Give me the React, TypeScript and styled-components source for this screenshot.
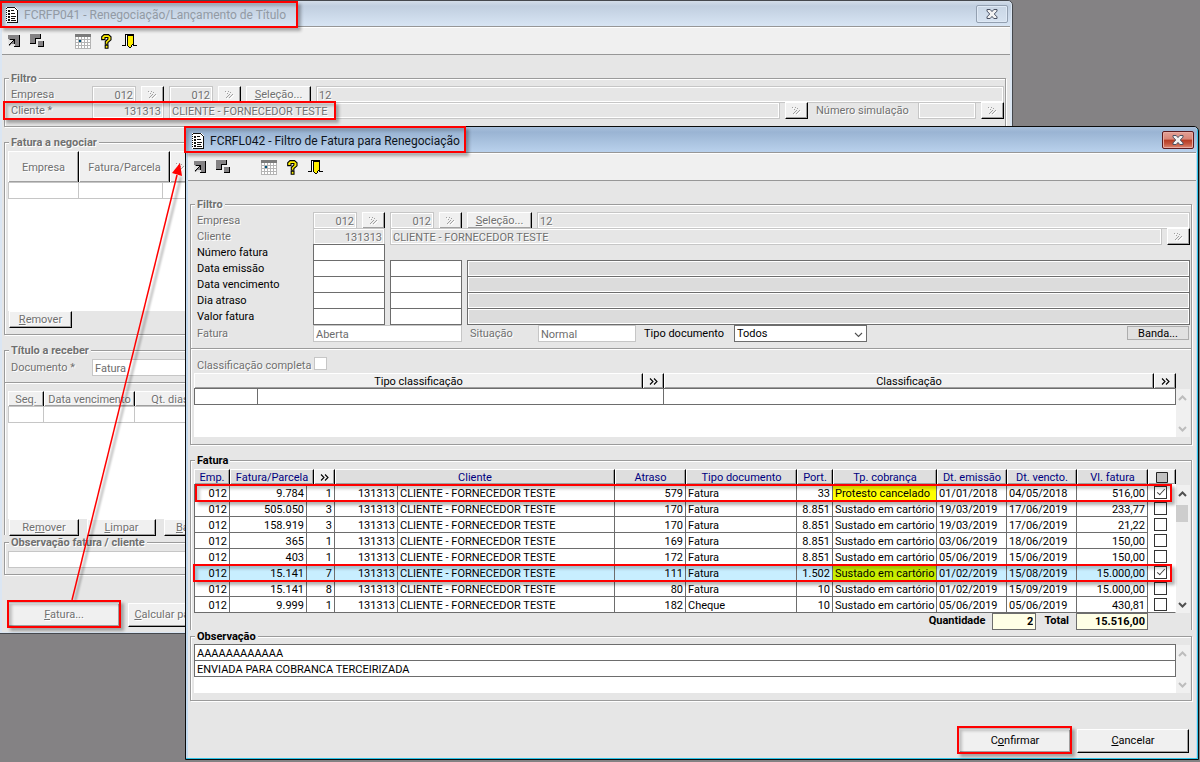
import React, { ReactNode } from "react";
import styled, { createGlobalStyle, css } from "styled-components";

const GlobalStyle = createGlobalStyle`
  *, *::before, *::after { box-sizing: border-box; }
  body {
    margin: 0;
    background: #848284;
    font-family: Roboto, "Liberation Sans", Arial, sans-serif;
    font-size: 11px;
    line-height: 15px;
    color: #000;
  }
  button, input, select { font: inherit; color: inherit; margin: 0; border-radius: 0; outline: none; }
`;

const muted = css`
  color: #707070;
  text-shadow: 1px 1px 0 #fff;
`;

const Desktop = styled.main`
  position: relative;
  min-height: 100vh;
  min-width: 1100px;
  overflow: hidden;
  background: #848284;
`;

/* ---------- window chrome ---------- */

const WindowBox = styled.section<{ $front?: boolean }>`
  position: absolute;
  top: ${(p) => (p.$front ? 126 : 0)}px;
  left: ${(p) => (p.$front ? 185 : -1)}px;
  right: ${(p) => (p.$front ? 1 : 187)}px;
  padding: 0 2px 1px;
  border: 1px solid ${(p) => (p.$front ? "#0b0b0b" : "#45484d")};
  border-radius: 0 5px 0 0;
  overflow: ${(p) => (p.$front ? "visible" : "hidden")};
  background: ${(p) => (p.$front ? "#c3daef" : "#dbe6f3")};
  box-shadow: ${(p) => (p.$front ? "inset -1px -1px 0 #2fc4e8" : "none")};
`;

const TitleBar = styled.header<{ $front?: boolean }>`
  display: flex;
  align-items: center;
  justify-content: space-between;
  height: 25px;
  margin: 0 -1px 0 -2px;
  padding: 0 3px 0 6px;
  border-radius: 0 4px 0 0;
  background: ${(p) =>
    p.$front
      ? "linear-gradient(#a9c0dc 0, #9ab4d3 5px, #b9d1ec 100%)"
      : "linear-gradient(#d3dde9 0, #c0cedf 5px, #d8e5f4 100%)"};
`;

const TitleText = styled.h1<{ $front?: boolean }>`
  display: flex;
  align-items: center;
  gap: 5px;
  margin: 0;
  padding-top: 3px;
  font: 400 12px/18px Roboto, "Noto Sans", sans-serif;
  white-space: nowrap;
  color: ${(p) => (p.$front ? "#10151c" : "#929aa4")};
`;

const CloseButton = styled.button<{ $front?: boolean }>`
  display: grid;
  place-items: center;
  width: 32px;
  height: 18px;
  padding: 0;
  border: 1px solid ${(p) => (p.$front ? "#5b1a1e" : "#93a0b1")};
  border-radius: 2px;
  box-shadow: inset 0 0 0 1px ${(p) => (p.$front ? "#e8aba2" : "#dfe9f5")};
  background: ${(p) =>
    p.$front
      ? "linear-gradient(#e2a096 0, #d98577 45%, #b53a22 50%, #c5563f 75%, #dd8a74 100%)"
      : "linear-gradient(#c9d6e5, #d6e2f0)"};
`;

const Toolbar = styled.nav`
  display: flex;
  height: 29px;
  border-top: 1px solid #979797;
  border-bottom: 1px solid #979797;
  box-shadow: inset 0 1px 0 #fff;
  background: #f0f0f0;
`;

const ToolButton = styled.button<{ $apart?: boolean }>`
  display: grid;
  place-items: center;
  width: 23px;
  padding: 1px 0 0 1px;
  margin-left: ${(p) => (p.$apart ? 23 : 0)}px;
  border: 0;
  background: none;
`;

const Body = styled.div`
  padding: 17px 4px 5px 2px;
  background: #e6e6e6;
`;

/* ---------- groups, rows, fields ---------- */

const Group = styled.fieldset<{ $top?: number; $bottom?: number; $joined?: boolean; $next?: boolean }>`
  min-width: 0;
  margin: ${(p) => (p.$next ? 1 : 0)}px 0 ${(p) => (p.$joined ? 0 : 9)}px;
  padding: ${(p) => p.$top ?? 1}px 1px ${(p) => (p.$joined ? 0 : p.$bottom ?? 7)}px 3px;
  border: 1px solid #9b9b9b;
  border-bottom-width: ${(p) => (p.$joined ? 0 : 1)}px;
  box-shadow: 1px ${(p) => (p.$joined ? 0 : 1)}px 0 #fff, inset 1px 1px 0 #fff;
`;

const Legend = styled.legend<{ $muted?: boolean }>`
  height: 13px;
  margin-left: 1px;
  padding: 0 2px;
  line-height: 13px;
  font-weight: 700;
  background: #e6e6e6;
  ${(p) => p.$muted && muted}
`;

const Row = styled.div<{ $before?: number }>`
  position: relative;
  display: flex;
  gap: 5px;
  height: 16px;
  margin-top: ${(p) => p.$before ?? 0}px;
`;

const Label = styled.label<{ $muted?: boolean; $width: number; $gap?: boolean }>`
  flex: none;
  width: ${(p) => p.$width}px;
  margin-right: ${(p) => (p.$gap ? 0 : -5)}px;
  padding: 1px 0 0 3px;
  line-height: 16px;
  white-space: nowrap;
  ${(p) => p.$muted && muted}
`;

const Field = styled.input<{
  $width?: number;
  $look?: "plain" | "off" | "shaded" | "listed" | "total";
  $right?: boolean;
}>`
  flex: ${(p) => (p.$width ? "none" : "1")};
  width: ${(p) => (p.$width ? p.$width + "px" : "auto")};
  min-width: 0;
  height: 17px;
  padding: 1px 2px 0;
  border: 1px solid #6d6d6d;
  background: #fff;
  text-align: ${(p) => (p.$right ? "right" : "left")};
  ${(p) =>
    p.$look === "off" &&
    css`
      ${muted}
      border-color: #c6c6c6;
      background: #e6e6e6;
      box-shadow: inset 1px 1px 0 #fff, inset -1px -1px 0 #fff;
    `}
  ${(p) =>
    p.$look === "shaded" &&
    css`
      background: #dcdcdc;
      box-shadow: inset 1px 1px 0 #fff, inset -1px -1px 0 #fff;
    `}
  ${(p) =>
    p.$look === "listed" &&
    css`
      color: #6d6d6d;
      border-color: #c6c6c6;
    `}
  ${(p) =>
    p.$look === "total" &&
    css`
      padding-top: 0;
      background: #ffffe6;
      font-weight: 700;
    `}
`;

const PushButton = styled.button<{
  $width: number;
  $tall?: boolean;
  $muted?: boolean;
  $flat?: boolean;
}>`
  position: relative;
  display: flex;
  align-items: center;
  justify-content: center;
  flex: none;
  width: ${(p) => p.$width}px;
  height: ${(p) => (p.$tall ? 24 : 17)}px;
  padding: 0 0 ${(p) => (p.$tall ? 2 : 0)}px;
  white-space: pre;
  border: solid;
  border-width: 1px;
  border-color: #fff #000 #000 #fff;
  box-shadow: inset -1px -1px 0 #a0a0a0;
  background: #f0f0f0;
  ${(p) => p.$muted && muted}
  ${(p) =>
    p.$flat &&
    css`
      height: 14px;
      margin: 1px 1px 0 auto;
      border-color: #adadad;
      box-shadow: none;
      background: #e1e1e1;
    `}
`;

const SelectBox = styled.span`
  position: relative;
  flex: none;
  width: 133px;
  height: 17px;
  svg { position: absolute; right: 4px; top: 7px; pointer-events: none; }
`;

const Select = styled.select`
  appearance: none;
  display: block;
  width: 100%;
  height: 17px;
  padding: 0 0 2px 2px;
  border: 1px solid #6d6d6d;
  background: #fff;
`;

const Tick = styled.input<{ $muted?: boolean }>`
  appearance: none;
  position: relative;
  display: block;
  width: 13px;
  height: 13px;
  border: 1px solid ${(p) => (p.$muted ? "#c6c6c6" : "#333")};
  background: #fff;
  &:checked::after {
    content: "";
    position: absolute;
    left: 4px;
    top: 0;
    width: 4px;
    height: 8px;
    border: solid #444;
    border-width: 0 1px 1px 0;
    transform: rotate(42deg);
  }
`;

const Divider = styled.hr`
  height: 2px;
  margin: 7px -1px 7px -3px;
  border: 0;
  border-top: 1px solid #9b9b9b;
  background: #fff;
`;

const Commands = styled.div<{ $side: "left" | "right" }>`
  display: flex;
  gap: ${(p) => (p.$side === "left" ? 8 : 6)}px;
  justify-content: ${(p) => (p.$side === "left" ? "flex-start" : "flex-end")};
  margin-top: 28px;
  padding: ${(p) => (p.$side === "left" ? "0 0 0 4px" : "0 3px 0 0")};
`;

const GridButtons = styled.div`
  display: flex;
  gap: 8px;
  height: 16px;
  padding-left: 1px;
`;

/* ---------- grids ---------- */

const GridArea = styled.div`
  display: flex;
  position: relative;
`;

const Sheet = styled.div<{ $height?: number }>`
  flex: 1;
  min-width: 0;
  height: ${(p) => (p.$height ? p.$height + "px" : "auto")};
  background: #fff;
`;

const Grid = styled.table<{ $muted?: boolean }>`
  width: 100%;
  table-layout: fixed;
  border-collapse: separate;
  border-spacing: 0;
  --line: ${(p) => (p.$muted ? "#c6c6c6" : "#6d6d6d")};
`;

const Head = styled.th<{ $navy?: boolean; $muted?: boolean; $height?: number; $button?: boolean }>`
  height: ${(p) => p.$height ?? 15}px;
  padding: ${(p) => (p.$button ? 0 : 2)}px 0 0;
  font-weight: 400;
  line-height: 12px;
  white-space: nowrap;
  border-top: 1px solid #fff;
  border-right: 1px solid #000;
  border-left: 1px solid #fff;
  box-shadow: inset -1px -1px 0 #a0a0a0;
  color: ${(p) => (p.$navy ? "#000080" : "#000")};
  background: ${(p) => (p.$navy && !p.$button ? "#dedede" : "#f0f0f0")};
  ${(p) => p.$muted && muted}
  svg { display: block; margin: 0 auto; }
`;

const Cell = styled.td<{ $right?: boolean; $tint?: string; $open?: boolean }>`
  height: 16px;
  padding: 3px 2px 0;
  line-height: 12px;
  text-align: ${(p) => (p.$right ? "right" : "left")};
  vertical-align: top;
  white-space: nowrap;
  overflow: hidden;
  border-top: 1px solid var(--line);
  border-right: 1px solid var(--line);
  background: ${(p) => p.$tint ?? "transparent"};
  &:first-child { border-left: 1px solid var(--line); }
  tr:last-child > & { border-bottom: 1px solid var(--line); height: 17px; }
  ${(p) =>
    p.$open &&
    css`
      && { border-color: transparent; padding: 1px 0 0 6px; background: #fff; }
    `}
`;

const ScrollTrack = styled.div<{ $offset?: number }>`
  display: flex;
  flex-direction: column;
  justify-content: space-between;
  align-items: center;
  position: relative;
  width: 14px;
  margin-top: ${(p) => p.$offset ?? 0}px;
  padding: 6px 2px 5px 0;
  background: #f0f0f0;
`;

const Thumb = styled.i`
  position: absolute;
  top: 20px;
  left: 0;
  width: 12px;
  height: 17px;
  background: #cdcdcd;
`;

const Totals = styled.div`
  display: flex;
  gap: 6px;
  height: 17px;
  padding-right: 42px;
  justify-content: flex-end;
  font-weight: 700;
  label { padding: 0 1px 0 2px; }
`;

/* ---------- red call-outs ---------- */

const Mark = styled.span<{ $top: number; $left: number; $right?: number; $width?: number; $height: number }>`
  position: absolute;
  z-index: 3;
  top: ${(p) => p.$top}px;
  left: ${(p) => p.$left}px;
  right: ${(p) => (p.$right === undefined ? "auto" : p.$right + "px")};
  width: ${(p) => (p.$width ? p.$width + "px" : "auto")};
  height: ${(p) => p.$height}px;
  border: 2px solid #ff0000;
  box-shadow: 3px 3px 3px rgba(0, 0, 0, 0.3), inset 3px 3px 3px rgba(0, 0, 0, 0.2);
  pointer-events: none;
`;

const Pointer = styled.svg`
  position: absolute;
  left: 60px;
  top: 155px;
  z-index: 1;
  pointer-events: none;
  .shade { filter: blur(1px); }
`;

/* ---------- drawings ---------- */

const SheetIcon = () => (
  <svg width="13" height="16" viewBox="0 0 13 16" shapeRendering="crispEdges" aria-hidden="true">
    <path d="M0 0h9l3 3v13H0z" fill="#fff" />
    <path d="M0 1h1v1H0zM0 3h1v1H0zM0 5h1v1H0zM0 7h1v1H0zM0 9h1v1H0zM0 11h1v1H0zM0 13h1v1H0zM1 0h8v1H1zM9 1h1v1H9zM10 2h1v1h-1zM11 3h1v12h-1zM1 15h11v1H1z" fill="#111" />
    <path d="M2 3h2v2H2zM5 3h3v1H5zM2 6h2v2H2zM5 6h4v1H5zM2 9h2v2H2zM5 9h5v1H5zM5 11h4v1H5zM2 12h2v2H2zM5 13h5v1H5z" fill="#111" />
  </svg>
);

const CrossIcon = () => (
  <svg width="12" height="10" viewBox="0 0 12 10" aria-hidden="true">
    <path d="M1 .5h3.2L6 2.6 7.800 .5H11v1.600L8.300 5 11 7.900v1.600H7.800L6 7.400 4.200 9.500H1V7.900L3.700 5 1 2.100z" fill="#f2f2f2" stroke="#4a5163" />
  </svg>
);

const RestoreIcon = () => (
  <svg width="12" height="12" viewBox="0 0 12 12" shapeRendering="crispEdges" aria-hidden="true">
    <path d="M0 0h11v11H0z" fill="#848284" />
    <path d="M0 4h1v7H0zM1 5h4v1H1zM1 6h3v1H1zM1 7h2v1H1zM1 8h1v1H1zM3 9h4v2H2v-1h1z" fill="#e4e4e4" />
    <path d="M2 4h5v5H6V6H5v1H4v1H3v1H2v1H1V9h1V8h1V7h1V6h1V5H2zM11 0h1v12H0v-1h11z" fill="#000" />
    <path d="M0 11h6v1H0z" fill="#f0f0f0" />
  </svg>
);

const CascadeIcon = () => (
  <svg width="15" height="14" viewBox="0 0 15 14" shapeRendering="crispEdges" aria-hidden="true">
    <path d="M0 0h10v4H5v5H0z" fill="#848284" />
    <path d="M10 0h1v4h-1zM5 4h6v1H5zM5 5h1v4H5zM0 9h6v1H0z" fill="#000" />
    <path d="M8 7h5v5H8z" fill="#848284" />
    <path d="M13 7h1v6H8v-1h5z" fill="#000" />
  </svg>
);

const CalendarIcon = () => (
  <svg width="16" height="15" viewBox="0 0 16 15" shapeRendering="crispEdges" aria-hidden="true">
    <path d="M0 3h16v12H0z" fill="#fff" />
    <path d="M0 0h16v3H0z" fill="#7b7b7b" />
    <path d="M0 3h1v12H0zM15 3h1v12h-1zM0 14h16v1H0zM3 3h1v11H3zM6 3h1v11H6zM9 3h1v11H9zM12 3h1v11h-1zM1 5h14v1H1zM1 8h14v1H1zM1 11h14v1H1z" fill="#b4b4b4" />
    <path d="M4 6h2v2H4z" fill="#00557f" />
  </svg>
);

const HelpIcon = () => (
  <svg width="11" height="15" viewBox="0 0 11 15" aria-hidden="true">
    <path d="M3 .6h4.500L10 2.800v3L6.900 8.600v1.600H4.300V7.600L6.900 5V3.500H4V5.600H.7V2.800z" fill="#ffef00" stroke="#000" strokeWidth="1.100" />
    <path d="M4.200 11.300h2.800v2.900H4.200z" fill="#ffef00" stroke="#000" strokeWidth="1.100" />
  </svg>
);

const DoorIcon = () => (
  <svg width="15" height="14" viewBox="0 0 15 14" shapeRendering="crispEdges" aria-hidden="true">
    <path d="M3 0h9v1H3zM3 1h1v11H3zM11 1h1v11h-1zM0 11h4v1H0zM11 11h4v1h-4z" fill="#000" />
    <path d="M4 1h1v10H4z" fill="#fff" />
    <path d="M6 2h5v9H9v2H7v-1H6z" fill="#ffef00" />
    <path d="M5 1h1v11H5zM6 1h5v1H6zM6 12h1v1H6zM7 13h2v1H7zM9 11h1v2H9zM10 10h1v1h-1z" fill="#000" />
  </svg>
);

const FaintMore = () => (
  <svg width="10" height="8" viewBox="0 0 10 8" shapeRendering="crispEdges" aria-hidden="true">
    <path d="M0 0h1v1H0zM3 0h1v1H3zM2 2h1v1H2zM5 1h1v1H5zM4 3h1v1H4zM3 4h1v1H3zM2 5h1v1H2zM1 6h1v1H1zM7 3h1v1H7zM6 4h1v1H6zM5 5h1v1H5zM4 6h1v1H4z" fill="#a0a0a0" />
    <path d="M8 4h1v1H8zM7 5h1v1H7zM6 6h1v1H6zM5 7h1v1H5zM2 7h1v1H2zM1 1h1v1H1z" fill="#fff" />
  </svg>
);

const MoreIcon = () => (
  <svg width="9" height="7" viewBox="0 0 9 7" aria-hidden="true">
    <path d="M1 .5l3 3-3 3M5 .5l3 3-3 3" fill="none" stroke="#000" strokeWidth="1.100" />
  </svg>
);

const Chevron = ({ up, dark, thin }: { up?: boolean; dark?: boolean; thin?: boolean }) => (
  <svg width="9" height="6" viewBox="0 0 9 6" aria-hidden="true">
    <path
      d={up ? "M1 5l3.500-3.500L8 5" : "M1 1l3.500 3.500L8 1"}
      fill="none"
      stroke={dark ? "#505050" : "#bdbdbd"}
      strokeWidth={thin ? 1.1 : 2}
    />
  </svg>
);

/* ---------- shared pieces ---------- */

function Frame(props: { title: string; front?: boolean; mark: ReactNode; children: ReactNode }) {
  const { title, front, mark, children } = props;
  return (
    <WindowBox $front={front} aria-label={title}>
      <TitleBar $front={front}>
        <TitleText $front={front}>
          <SheetIcon />
          {title}
        </TitleText>
        <CloseButton $front={front} aria-label="Fechar">
          <CrossIcon />
        </CloseButton>
      </TitleBar>
      <Toolbar>
        <ToolButton aria-label="Restaurar"><RestoreIcon /></ToolButton>
        <ToolButton aria-label="Cascata"><CascadeIcon /></ToolButton>
        <ToolButton $apart aria-label="Agenda"><CalendarIcon /></ToolButton>
        <ToolButton aria-label="Ajuda"><HelpIcon /></ToolButton>
        <ToolButton aria-label="Sair"><DoorIcon /></ToolButton>
      </Toolbar>
      <Body>{children}</Body>
      {mark}
    </WindowBox>
  );
}

const Lookup = () => (
  <PushButton $width={23} $muted aria-label="Pesquisar">
    <FaintMore />
  </PushButton>
);

function CompanyRow({ id, labelWidth }: { id: string; labelWidth: number }) {
  return (
    <Row>
      <Label $muted $width={labelWidth} htmlFor={id}>Empresa</Label>
      <Field id={id} $width={44} $look="off" $right readOnly value="012" />
      <Lookup />
      <Field $width={44} $look="off" $right readOnly value="012" aria-label="Empresa final" />
      <Lookup />
      <PushButton $width={65} $muted><span><u>S</u>eleção...</span></PushButton>
      <Field $look="off" readOnly value="12" aria-label="Empresas selecionadas" />
    </Row>
  );
}

const Scroller = ({ offset, active }: { offset?: number; active?: boolean }) => (
  <ScrollTrack $offset={offset}>
    <Chevron up dark={active} />
    {active && <Thumb />}
    <Chevron dark={active} />
  </ScrollTrack>
);

/* ---------- back window ---------- */

function RenegotiationWindow() {
  return (
    <Frame
      title="FCRFP041 - Renegociação/Lançamento de Título"
      mark={<Mark $top={0} $left={0} $width={298} $height={27} />}
    >
      <Group $bottom={8}>
        <Legend $muted>Filtro</Legend>
        <CompanyRow id="r-empresa" labelWidth={84} />
        <Row>
          <Label $muted $width={84} htmlFor="r-cliente">Cliente *</Label>
          <Field id="r-cliente" $width={72} $look="off" $right readOnly value="131313" />
          <Field $look="off" readOnly value="CLIENTE - FORNECEDOR TESTE" aria-label="Nome do cliente" />
          <Lookup />
          <Label $muted $gap $width={100} htmlFor="r-simulacao">Número simulação</Label>
          <Field id="r-simulacao" $width={58} $look="off" readOnly value="" />
          <Lookup />
          <Mark $top={-1} $left={-5} $width={333} $height={19} />
        </Row>
      </Group>

      <Group $top={2}>
        <Legend $muted>Fatura a negociar</Legend>
        <Sheet $height={160}>
          <Grid $muted>
            <colgroup>
              <col width={71} /><col width={84} /><col width={7} /><col width={21} /><col />
            </colgroup>
            <thead>
              <tr>
                <Head $muted $height={31}>Empresa</Head>
                <Head $muted colSpan={2}>Fatura/Parcela</Head>
                <Head $muted $button><FaintMore /></Head>
                <Head $muted />
              </tr>
            </thead>
            <tbody>
              <tr><Cell /><Cell /><Cell colSpan={2} /><Cell /></tr>
            </tbody>
          </Grid>
        </Sheet>
        <GridButtons>
          <PushButton $width={63} $muted><span><u>R</u>emover</span></PushButton>
        </GridButtons>
      </Group>

      <Group $joined>
        <Legend $muted>Título a receber</Legend>
        <Row $before={1}>
          <Label $muted $width={84} htmlFor="r-documento">Documento *</Label>
          <Field id="r-documento" $look="listed" readOnly value="Fatura" />
        </Row>
        <Divider />
        <Sheet $height={128}>
          <Grid $muted>
            <colgroup>
              <col width={36} /><col width={91} /><col width={70} /><col />
            </colgroup>
            <thead>
              <tr>
                <Head $muted>Seq.</Head>
                <Head $muted>Data vencimento</Head>
                <Head $muted>Qt. dias</Head>
                <Head $muted />
              </tr>
            </thead>
            <tbody>
              <tr><Cell /><Cell /><Cell /><Cell /></tr>
            </tbody>
          </Grid>
        </Sheet>
        <GridButtons>
          <PushButton $width={70} $muted><span>Re<u>m</u>over</span></PushButton>
          <PushButton $width={69} $muted><span><u>L</u>impar</span></PushButton>
          <PushButton $width={55} $muted><span><u>B</u>anda</span></PushButton>
        </GridButtons>
      </Group>

      <Group $top={2} $next>
        <Legend $muted>Observação fatura / cliente</Legend>
        <Row>
          <Field $look="listed" readOnly value="" aria-label="Observação fatura / cliente" />
        </Row>
      </Group>

      <Commands $side="left">
        <PushButton $width={112} $tall $muted>
          <span><u>F</u>atura...</span>
          <Mark $top={-4} $left={-2} $width={114} $height={28} />
        </PushButton>
        <PushButton $width={80} $tall $muted><span><u>C</u>alcular parc.</span></PushButton>
      </Commands>
    </Frame>
  );
}

/* ---------- front window ---------- */

type Invoice = {
  number: string;
  part: string;
  late: string;
  kind: string;
  holder: string;
  billing: string;
  issued: string;
  due: string;
  value: string;
  picked?: boolean;
  billingTint?: string;
  tint?: string;
};

const held = "Sustado em cartório";

const invoices: Invoice[] = [
  { number: "9.784", part: "1", late: "579", kind: "Fatura", holder: "33", billing: "Protesto cancelado", issued: "01/01/2018", due: "04/05/2018", value: "516,00", picked: true, billingTint: "#ffff00" },
  { number: "505.050", part: "3", late: "170", kind: "Fatura", holder: "8.851", billing: held, issued: "19/03/2019", due: "17/06/2019", value: "233,77" },
  { number: "158.919", part: "3", late: "170", kind: "Fatura", holder: "8.851", billing: held, issued: "19/03/2019", due: "17/06/2019", value: "21,22" },
  { number: "365", part: "1", late: "169", kind: "Fatura", holder: "8.851", billing: held, issued: "03/06/2019", due: "18/06/2019", value: "150,00" },
  { number: "403", part: "1", late: "172", kind: "Fatura", holder: "8.851", billing: held, issued: "05/06/2019", due: "15/06/2019", value: "150,00" },
  { number: "15.141", part: "7", late: "111", kind: "Fatura", holder: "1.502", billing: held, issued: "01/02/2019", due: "15/08/2019", value: "15.000,00", picked: true, tint: "#c8eeff", billingTint: "#c8ee00" },
  { number: "15.141", part: "8", late: "80", kind: "Fatura", holder: "10", billing: held, issued: "01/02/2019", due: "15/09/2019", value: "15.000,00" },
  { number: "9.999", part: "1", late: "182", kind: "Cheque", holder: "10", billing: held, issued: "05/06/2019", due: "05/06/2019", value: "430,81" },
];

const ranges = [
  { id: "f-emissao", label: "Data emissão" },
  { id: "f-vencimento", label: "Data vencimento" },
  { id: "f-atraso", label: "Dia atraso" },
  { id: "f-valor", label: "Valor fatura" },
];

function InvoiceGrid() {
  return (
    <GridArea>
      <Sheet>
        <Grid>
          <colgroup>
            <col width={36} /><col width={77} /><col width={7} /><col width={21} />
            <col width={63} /><col /><col width={71} /><col width={111} />
            <col width={36} /><col width={104} /><col width={70} /><col width={70} />
            <col width={71} /><col width={28} />
          </colgroup>
          <thead>
            <tr>
              <Head $navy>Emp.</Head>
              <Head $navy colSpan={2}>Fatura/Parcela</Head>
              <Head $navy $button><MoreIcon /></Head>
              <Head $navy colSpan={2}>Cliente</Head>
              <Head $navy>Atraso</Head>
              <Head $navy>Tipo documento</Head>
              <Head $navy>Port.</Head>
              <Head $navy>Tp. cobrança</Head>
              <Head $navy>Dt. emissão</Head>
              <Head $navy>Dt. vencto.</Head>
              <Head $navy>Vl. fatura</Head>
              <Head $navy $button>
                <svg width="12" height="11" viewBox="0 0 12 11" aria-hidden="true">
                  <path d="M.5 .5h11v10H.5z" fill="#c0c0c0" stroke="#222" />
                </svg>
              </Head>
            </tr>
          </thead>
          <tbody>
            {invoices.map((v) => (
              <tr key={v.number + v.part}>
                <Cell $right $tint={v.tint}>012</Cell>
                <Cell $right $tint={v.tint}>{v.number}</Cell>
                <Cell $right $tint={v.tint} colSpan={2}>{v.part}</Cell>
                <Cell $right $tint={v.tint}>131313</Cell>
                <Cell $tint={v.tint}>CLIENTE - FORNECEDOR TESTE</Cell>
                <Cell $right $tint={v.tint}>{v.late}</Cell>
                <Cell $tint={v.tint}>{v.kind}</Cell>
                <Cell $right $tint={v.tint}>{v.holder}</Cell>
                <Cell $tint={v.billingTint}>{v.billing}</Cell>
                <Cell $tint={v.tint}>{v.issued}</Cell>
                <Cell $tint={v.tint}>{v.due}</Cell>
                <Cell $right $tint={v.tint}>{v.value}</Cell>
                <Cell $open>
                  <Tick type="checkbox" defaultChecked={v.picked} aria-label={"Fatura " + v.number + " parcela " + v.part} />
                </Cell>
              </tr>
            ))}
          </tbody>
        </Grid>
      </Sheet>
      <Scroller offset={16} active />
      <Mark $top={15} $left={1} $right={18} $height={18} />
      <Mark $top={95} $left={-1} $right={18} $height={18} />
    </GridArea>
  );
}

function InvoiceFilterWindow() {
  return (
    <Frame
      front
      title="FCRFL042 - Filtro de Fatura para Renegociação"
      mark={<Mark $top={-1} $left={-2} $width={282} $height={27} />}
    >
      <Group>
        <Legend $muted>Filtro</Legend>
        <CompanyRow id="f-empresa" labelWidth={119} />
        <Row>
          <Label $muted $width={119} htmlFor="f-cliente">Cliente</Label>
          <Field id="f-cliente" $width={72} $look="off" $right readOnly value="131313" />
          <Field $look="off" readOnly value="CLIENTE - FORNECEDOR TESTE" aria-label="Nome do cliente" />
          <Lookup />
        </Row>
        <Row>
          <Label $width={119} htmlFor="f-numero">Número fatura</Label>
          <Field id="f-numero" $width={72} />
        </Row>
        {ranges.map((r) => (
          <Row key={r.id}>
            <Label $width={119} htmlFor={r.id}>{r.label}</Label>
            <Field id={r.id} $width={72} />
            <Field $width={72} aria-label={r.label + " final"} />
            <Field $look="shaded" readOnly value="" aria-label={r.label + " descrição"} />
          </Row>
        ))}
        <Row $before={1}>
          <Label $muted $width={119} htmlFor="f-fatura">Fatura</Label>
          <Field id="f-fatura" $width={149} $look="listed" readOnly value="Aberta" />
          <Label $muted $gap $width={66} htmlFor="f-situacao">Situação</Label>
          <Field id="f-situacao" $width={98} $look="listed" readOnly value="Normal" />
          <Label $gap $width={88} htmlFor="f-tipo">Tipo documento</Label>
          <SelectBox>
            <Select id="f-tipo" defaultValue="Todos">
              <option>Todos</option>
            </Select>
            <Chevron dark thin />
          </SelectBox>
          <PushButton $width={62} $flat>Banda...</PushButton>
        </Row>
        <Divider />
        <Row>
          <Label $muted $width={120} htmlFor="f-completa">Classificação completa</Label>
          <Tick $muted type="checkbox" id="f-completa" />
        </Row>
        <GridArea>
          <Sheet $height={64}>
            <Grid>
              <colgroup>
                <col width={64} /><col /><col width={21} /><col width={490} /><col width={22} />
              </colgroup>
              <thead>
                <tr>
                  <Head colSpan={2}>Tipo classificação</Head>
                  <Head $button><MoreIcon /></Head>
                  <Head>Classificação</Head>
                  <Head $button><MoreIcon /></Head>
                </tr>
              </thead>
              <tbody>
                <tr><Cell /><Cell colSpan={2} /><Cell colSpan={2} /></tr>
              </tbody>
            </Grid>
          </Sheet>
          <Scroller offset={16} />
        </GridArea>
      </Group>

      <Group $top={2} $joined>
        <Legend>Fatura</Legend>
        <InvoiceGrid />
        <Totals>
          <label htmlFor="f-quantidade">Quantidade</label>
          <Field id="f-quantidade" $width={44} $look="total" $right readOnly value="2" />
          <label htmlFor="f-total">Total</label>
          <Field id="f-total" $width={72} $look="total" $right readOnly value="15.516,00" />
        </Totals>
      </Group>

      <Group>
        <Legend>Observação</Legend>
        <GridArea>
          <Sheet $height={49}>
            <Grid>
              <tbody>
                <tr><Cell>AAAAAAAAAAAA</Cell></tr>
                <tr><Cell>ENVIADA PARA COBRANCA TERCEIRIZADA</Cell></tr>
              </tbody>
            </Grid>
          </Sheet>
          <Scroller offset={1} />
        </GridArea>
      </Group>

      <Commands $side="right">
        <PushButton $width={112} $tall>
          <span>C<u>o</u>nfirmar</span>
          <Mark $top={-4} $left={-3} $width={115} $height={28} />
        </PushButton>
        <PushButton $width={112} $tall><span><u>C</u>ancelar</span></PushButton>
      </Commands>
    </Frame>
  );
}

export default function App() {
  return (
    <>
      <GlobalStyle />
      <Desktop>
        <RenegotiationWindow />
        <Pointer width="130" height="450" viewBox="0 0 130 450" aria-hidden="true">
          <path className="shade" d="M15 446L121 22" stroke="#000" strokeOpacity="0.3" strokeWidth="2" />
          <path d="M12 445L117 20" stroke="#ff0000" strokeWidth="1.500" />
          <path d="M120 8l2 13-10-3z" fill="#ff0000" />
        </Pointer>
        <InvoiceFilterWindow />
      </Desktop>
    </>
  );
}
